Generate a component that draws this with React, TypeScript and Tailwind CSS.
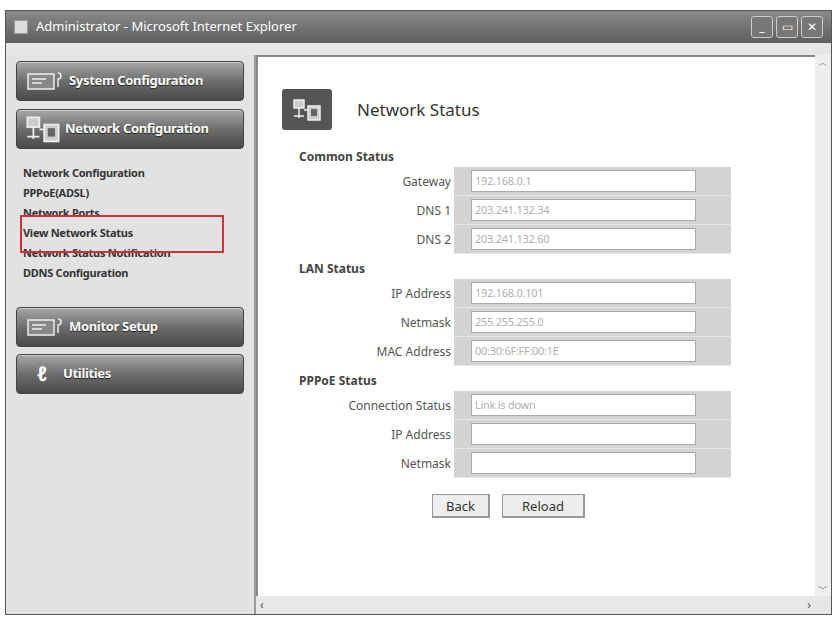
import React from 'react';

const sections = [
  {
    title: 'Common Status',
    rows: [
      { label: 'Gateway', value: '192.168.0.1' },
      { label: 'DNS 1', value: '203.241.132.34' },
      { label: 'DNS 2', value: '203.241.132.60' },
    ],
  },
  {
    title: 'LAN Status',
    rows: [
      { label: 'IP Address', value: '192.168.0.101' },
      { label: 'Netmask', value: '255.255.255.0' },
      { label: 'MAC Address', value: '00:30:6F:FF:00:1E' },
    ],
  },
  {
    title: 'PPPoE Status',
    rows: [
      { label: 'Connection Status', value: 'Link is down' },
      { label: 'IP Address', value: '' },
      { label: 'Netmask', value: '' },
    ],
  },
];

const links = [
  'Network Configuration',
  'PPPoE(ADSL)',
  'Network Ports',
  'View Network Status',
  'Network Status Notification',
  'DDNS Configuration',
];

const NetIcon = ({ size = 30 }: { size?: number }) => (
  <svg width={size} height={size * 0.8} viewBox="0 0 30 24" fill="none" stroke="#eee" strokeWidth="1.5">
    <rect x="2" y="2" width="10" height="8" fill="#ccc" />
    <path d="M7 10v6M2 18h10M7 16v4" />
    <path d="M12 12h4" />
    <rect x="16" y="8" width="12" height="14" fill="#ccc" />
    <rect x="19" y="11" width="6" height="7" fill="#666" stroke="none" />
  </svg>
);

const MenuButton = ({ label, icon }: { label: string; icon: React.ReactNode }) => (
  <div className="h-[40px] mx-[10px] rounded-[4px] border border-[#444] bg-gradient-to-b from-[#a8a8a8] via-[#6e6e6e] to-[#4a4a4a] flex items-center gap-1 px-2 shadow-[inset_0_1px_0_#ccc]">
    {icon}
    <span className="text-white font-bold text-[13px] tracking-tight [text-shadow:0_1px_1px_#222]">{label}</span>
  </div>
);

const BoxIcon = () => (
  <svg width="40" height="24" viewBox="0 0 40 24" fill="none" stroke="#eee" strokeWidth="1.5">
    <rect x="3" y="5" width="26" height="15" fill="#888" />
    <path d="M7 10h14M7 14h10" />
    <path d="M33 4a3 3 0 1 1 0 6v8" />
  </svg>
);

const App: React.FC = () => {
  return (
    <div className="w-[837px] h-[620px] bg-white font-[family-name:'DejaVu_Sans',sans-serif] pt-[10px] px-[5px]">
      <div className="h-[605px] border border-[#555] bg-[#e6e6e6] flex flex-col">
        {/* Title bar */}
        <div className="h-[32px] bg-gradient-to-b from-[#8a8a8a] to-[#5e5e5e] flex items-center px-2 gap-2">
          <div className="w-[14px] h-[14px] bg-[#ddd] border border-[#999]" />
          <span className="text-white text-[13px] flex-1">Administrator - Microsoft Internet Explorer</span>
          <div className="flex gap-[3px]">
            {['_', '▭', '✕'].map((s) => (
              <div key={s} className="w-[22px] h-[22px] border border-[#ccc] rounded-[3px] bg-[#777] text-white text-[12px] leading-[20px] text-center">{s}</div>
            ))}
          </div>
        </div>
        <div className="flex-1 flex min-h-0 pt-[12px]">
          {/* Sidebar */}
          <div className="w-[250px] bg-[#e2e2e2] border-r-2 border-[#999] pt-[6px] flex flex-col">
            <div className="flex flex-col gap-[8px]">
              <MenuButton label="System Configuration" icon={<BoxIcon />} />
              <MenuButton label="Network Configuration" icon={<NetIcon size={36} />} />
            </div>
            <div className="mt-[14px] ml-[17px] flex flex-col text-[11px] font-bold text-[#333] leading-[20px] relative tracking-tight">
              {links.map((l) => <span key={l}>{l}</span>)}
              <div className="absolute left-[-3px] top-[52px] w-[204px] h-[38px] border-2 border-[#d0303a]" />
            </div>
            <div className="mt-[24px] flex flex-col gap-[7px]">
              <MenuButton label="Monitor Setup" icon={<BoxIcon />} />
              <MenuButton label="Utilities" icon={<span className="text-white text-[20px] italic font-bold w-[34px] text-center">ℓ</span>} />
            </div>
          </div>
          {/* Content */}
          <div className="flex-1 flex flex-col min-w-0">
            <div className="flex-1 flex min-h-0">
              <div className="flex-1 bg-white border-t-2 border-l-2 border-[#888] pl-[24px] pt-[32px]">
                <div className="flex items-center gap-[25px]">
                  <div className="w-[50px] h-[41px] rounded-[3px] bg-[#555] flex items-center justify-center"><NetIcon /></div>
                  <span className="text-[17px] text-[#333]">Network Status</span>
                </div>
                <div className="mt-[18px] pl-[17px]">
                  {sections.map((s) => (
                    <div key={s.title} className="mb-[6px]">
                      <div className="text-[12px] font-bold text-[#444] h-[19px]">{s.title}</div>
                      <div className="flex flex-col">
                        {s.rows.map((r, i) => (
                          <div key={i} className="flex items-center h-[29px]">
                            <div className="w-[155px] text-right pr-[3px] text-[12px] text-[#555]">{r.label}</div>
                            <div className="w-[277px] h-[29px] bg-[#d3d3d3] border-b border-[#e6e6e6] flex items-center pl-[17px]">
                              <div className="w-[225px] h-[22px] bg-white border border-[#aaa] text-[11px] text-[#b0b0b0] px-[3px] leading-[20px] tracking-tight">{r.value}</div>
                            </div>
                          </div>
                        ))}
                      </div>
                    </div>
                  ))}
                </div>
                <div className="flex gap-[12px] ml-[150px] mt-[16px]">
                  <div className="w-[58px] h-[24px] bg-[#eee] border border-[#999] border-b-2 border-r-2 text-[13px] text-center leading-[22px] text-[#333]">Back</div>
                  <div className="w-[83px] h-[24px] bg-[#eee] border border-[#999] border-b-2 border-r-2 text-[13px] text-center leading-[22px] text-[#333]">Reload</div>
                </div>
              </div>
              <div className="w-[16px] bg-[#eee] flex flex-col justify-between items-center text-[10px] text-[#555]">
                <span>︿</span><span>﹀</span>
              </div>
            </div>
            <div className="h-[18px] bg-[#e8e8e8] flex justify-between items-center px-[4px] text-[12px] text-[#555] mr-[16px]">
              <span>‹</span><span>›</span>
            </div>
          </div>
        </div>
      </div>
    </div>
  );
};

export default App;
